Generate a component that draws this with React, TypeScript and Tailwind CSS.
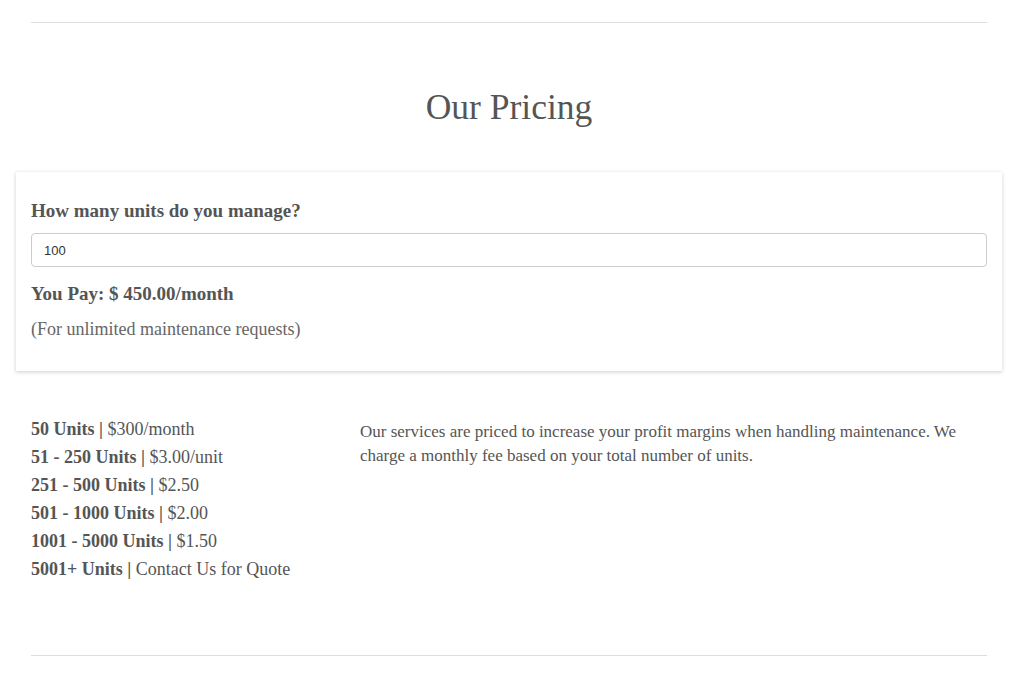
const tiers = [
  { units: '50 Units', price: '$300/month' },
  { units: '51 - 250 Units', price: '$3.00/unit' },
  { units: '251 - 500 Units', price: '$2.50' },
  { units: '501 - 1000 Units', price: '$2.00' },
  { units: '1001 - 5000 Units', price: '$1.50' },
  { units: '5001+ Units', price: 'Contact Us for Quote' },
]

export default function App() {
  return (
    <div className="min-h-[674px] bg-white font-['Liberation_Serif',serif] text-[#555]">
      <div className="pl-[31px] pr-[40px]">
        <hr className="mt-[22px] border-[#ddd]" />

        <h1 className="mt-[64px] text-center text-[35.5px] leading-[40px] text-[#555]">Our Pricing</h1>

        {/* calculator card */}
        <div className="mx-[-15px] mt-[45px] bg-white px-[15px] pt-[26px] pb-[30px] shadow-[0_1px_4px_rgba(0,0,0,0.2)]">
          <h3 className="text-[19px] leading-[25px] font-bold">How many units do you manage?</h3>
          <input
            type="text"
            defaultValue="100"
            className="mt-[10px] block h-[34px] w-full rounded-[4px] border border-[#ccc] px-[12px] font-['Liberation_Sans',sans-serif] text-[13px] text-[#333] outline-none"
          />
          <h3 className="mt-[14px] text-[19px] leading-[25px] font-bold">You Pay: $ 450.00/month</h3>
          <p className="mt-[11px] text-[18px] leading-[24px] text-[#666]">(For unlimited maintenance requests)</p>
        </div>

        <div className="mt-[44px] flex">
          <div className="w-[314px] shrink-0">
            {tiers.map((t) => (
              <div key={t.units} className="text-[18px] leading-[28px]">
                <b>{t.units} |</b> {t.price}
              </div>
            ))}
          </div>
          <div className="ml-[15px] flex-1 pt-[5px]">
            <p className="text-[17px] leading-[24px]">
              Our services are priced to increase your profit margins when handling maintenance. We charge a monthly fee based on your total number of units.
            </p>
          </div>
        </div>

        <hr className="mt-[72px] border-[#ddd]" />
      </div>
    </div>
  )
}
